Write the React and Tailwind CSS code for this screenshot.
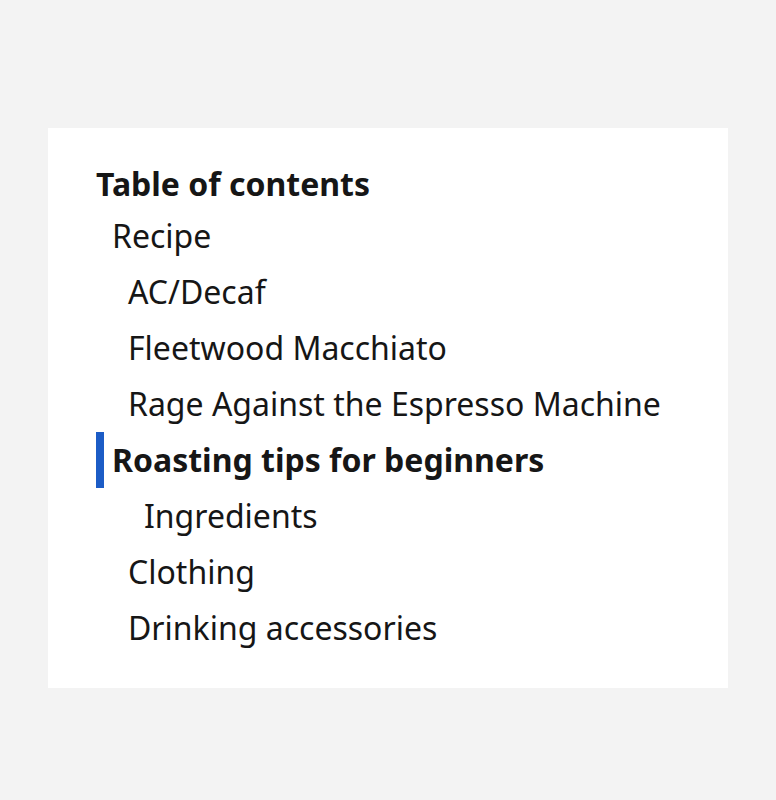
import React from "react";

const items = [
  { label: "Recipe", indent: "pl-4" },
  { label: "AC/Decaf", indent: "pl-8" },
  { label: "Fleetwood Macchiato", indent: "pl-8" },
  { label: "Rage Against the Espresso Machine", indent: "pl-8" },
  { label: "Roasting tips for beginners", indent: "pl-4", active: true },
  { label: "Ingredients", indent: "pl-12" },
  { label: "Clothing", indent: "pl-8" },
  { label: "Drinking accessories", indent: "pl-8" },
];

export default function App() {
  return (
    <div
      className="min-h-screen bg-[#f3f3f3] px-12 pt-32 pb-28"
      style={{ fontFamily: '"Noto Sans", sans-serif' }}
    >
      <nav className="bg-white px-12 pt-8 pb-8 text-[#161616]">
        <h2 className="text-[32px] leading-[48px] font-bold">Table of contents</h2>
        <ul>
          {items.map((item) => (
            <li key={item.label} className="flex h-14 items-stretch">
              {item.active ? (
                <>
                  <span className="w-2 bg-[#1c5cc6]" />
                  <span className="pl-2 text-[32px] leading-[56px] font-bold">{item.label}</span>
                </>
              ) : (
                <span className={`${item.indent} text-[32px] leading-[56px]`}>{item.label}</span>
              )}
            </li>
          ))}
        </ul>
      </nav>
    </div>
  );
}
